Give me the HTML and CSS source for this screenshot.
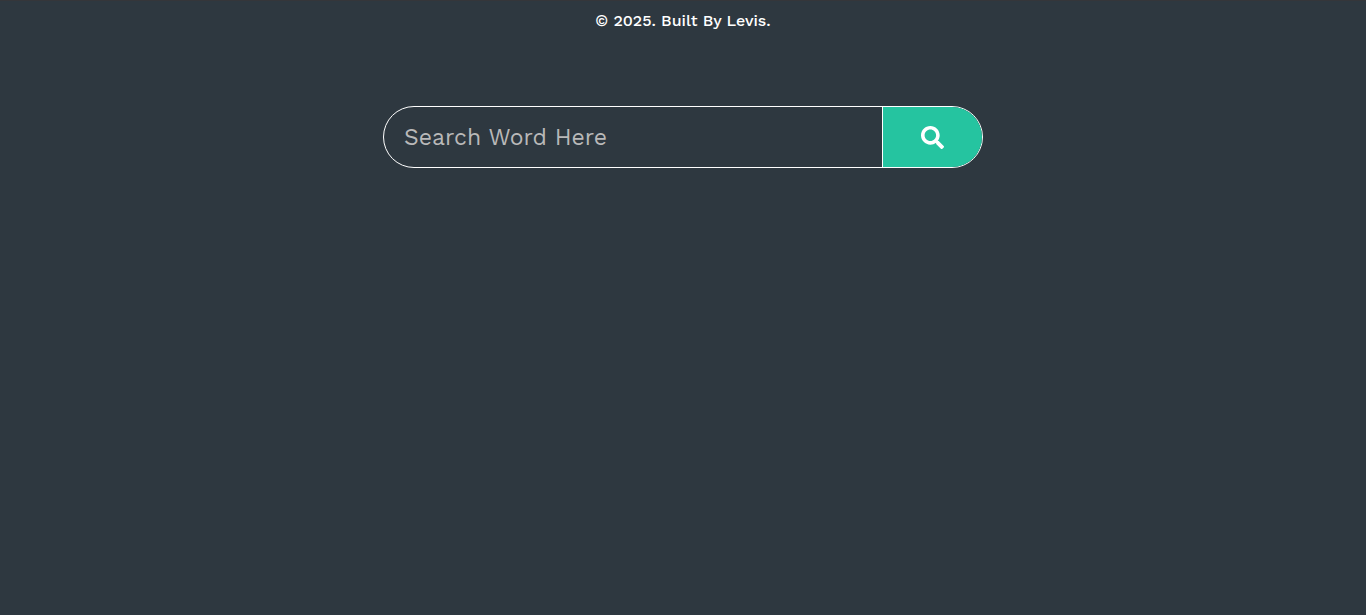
FILE: index.html
```html
<!DOCTYPE html>
<html lang="en">
<head>
<meta charset="utf-8">
<meta name="viewport" content="width=device-width, initial-scale=1">
<title>Search Word</title>
<link rel="stylesheet" href="styles.css">
</head>
<body class="page">
<header class="credit">© 2025. Built By Levis.</header>
<main class="content">
<form class="search" role="search">
<input class="search-input" type="text" placeholder="Search Word Here" aria-label="Search word">
<button class="search-button" type="submit" aria-label="Search">
<svg class="search-icon" viewBox="0 0 512 512" aria-hidden="true"><path fill="currentColor" d="M505 442.7L405.300 343c-4.500-4.500-10.600-7-17-7H372c27.600-35.300 44-79.700 44-128C416 93.100 322.900 0 208 0S0 93.100 0 208s93.100 208 208 208c48.300 0 92.700-16.400 128-44v16.300c0 6.400 2.500 12.500 7 17l99.700 99.700c9.400 9.400 24.600 9.400 33.900 0l28.300-28.300c9.400-9.400 9.400-24.600.1-34zM208 336c-70.700 0-128-57.200-128-128 0-70.700 57.200-128 128-128 70.700 0 128 57.200 128 128 0 70.700-57.200 128-128 128z"/></svg>
</button>
</form>
</main>
</body>
</html>
```
FILE: styles.css
```css
* {
  box-sizing: border-box;
}

.page {
  margin: 0;
  min-height: 100vh;
  border-top: 1px solid #35363a;
  background: #2e3840;
  color: #fff;
  font-family: "Work Sans", Inter, sans-serif;
}

.credit {
  padding-top: 8px;
  font-size: 16px;
  font-weight: 500;
  line-height: 24px;
  text-align: center;
}

.content {
  padding: 73px 16px 16px;
}

.search {
  display: flex;
  max-width: 600px;
  height: 62px;
  margin: 0 auto;
  overflow: hidden;
  border: 1px solid #fff;
  border-radius: 31px;
}

.search-input {
  flex: 1;
  min-width: 0;
  padding: 0 20px;
  border: 0;
  outline: 0;
  background: transparent;
  color: #fff;
  font-family: inherit;
  font-size: 23px;
}

.search-input::placeholder {
  color: #b9b9b9;
  opacity: 1;
}

.search-button {
  display: flex;
  align-items: center;
  justify-content: center;
  width: 100px;
  padding: 0;
  border: 0;
  border-left: 1px solid #fff;
  background: #25c4a0;
  color: #fff;
  cursor: pointer;
}

.search-icon {
  width: 23px;
  height: 23px;
}
```
